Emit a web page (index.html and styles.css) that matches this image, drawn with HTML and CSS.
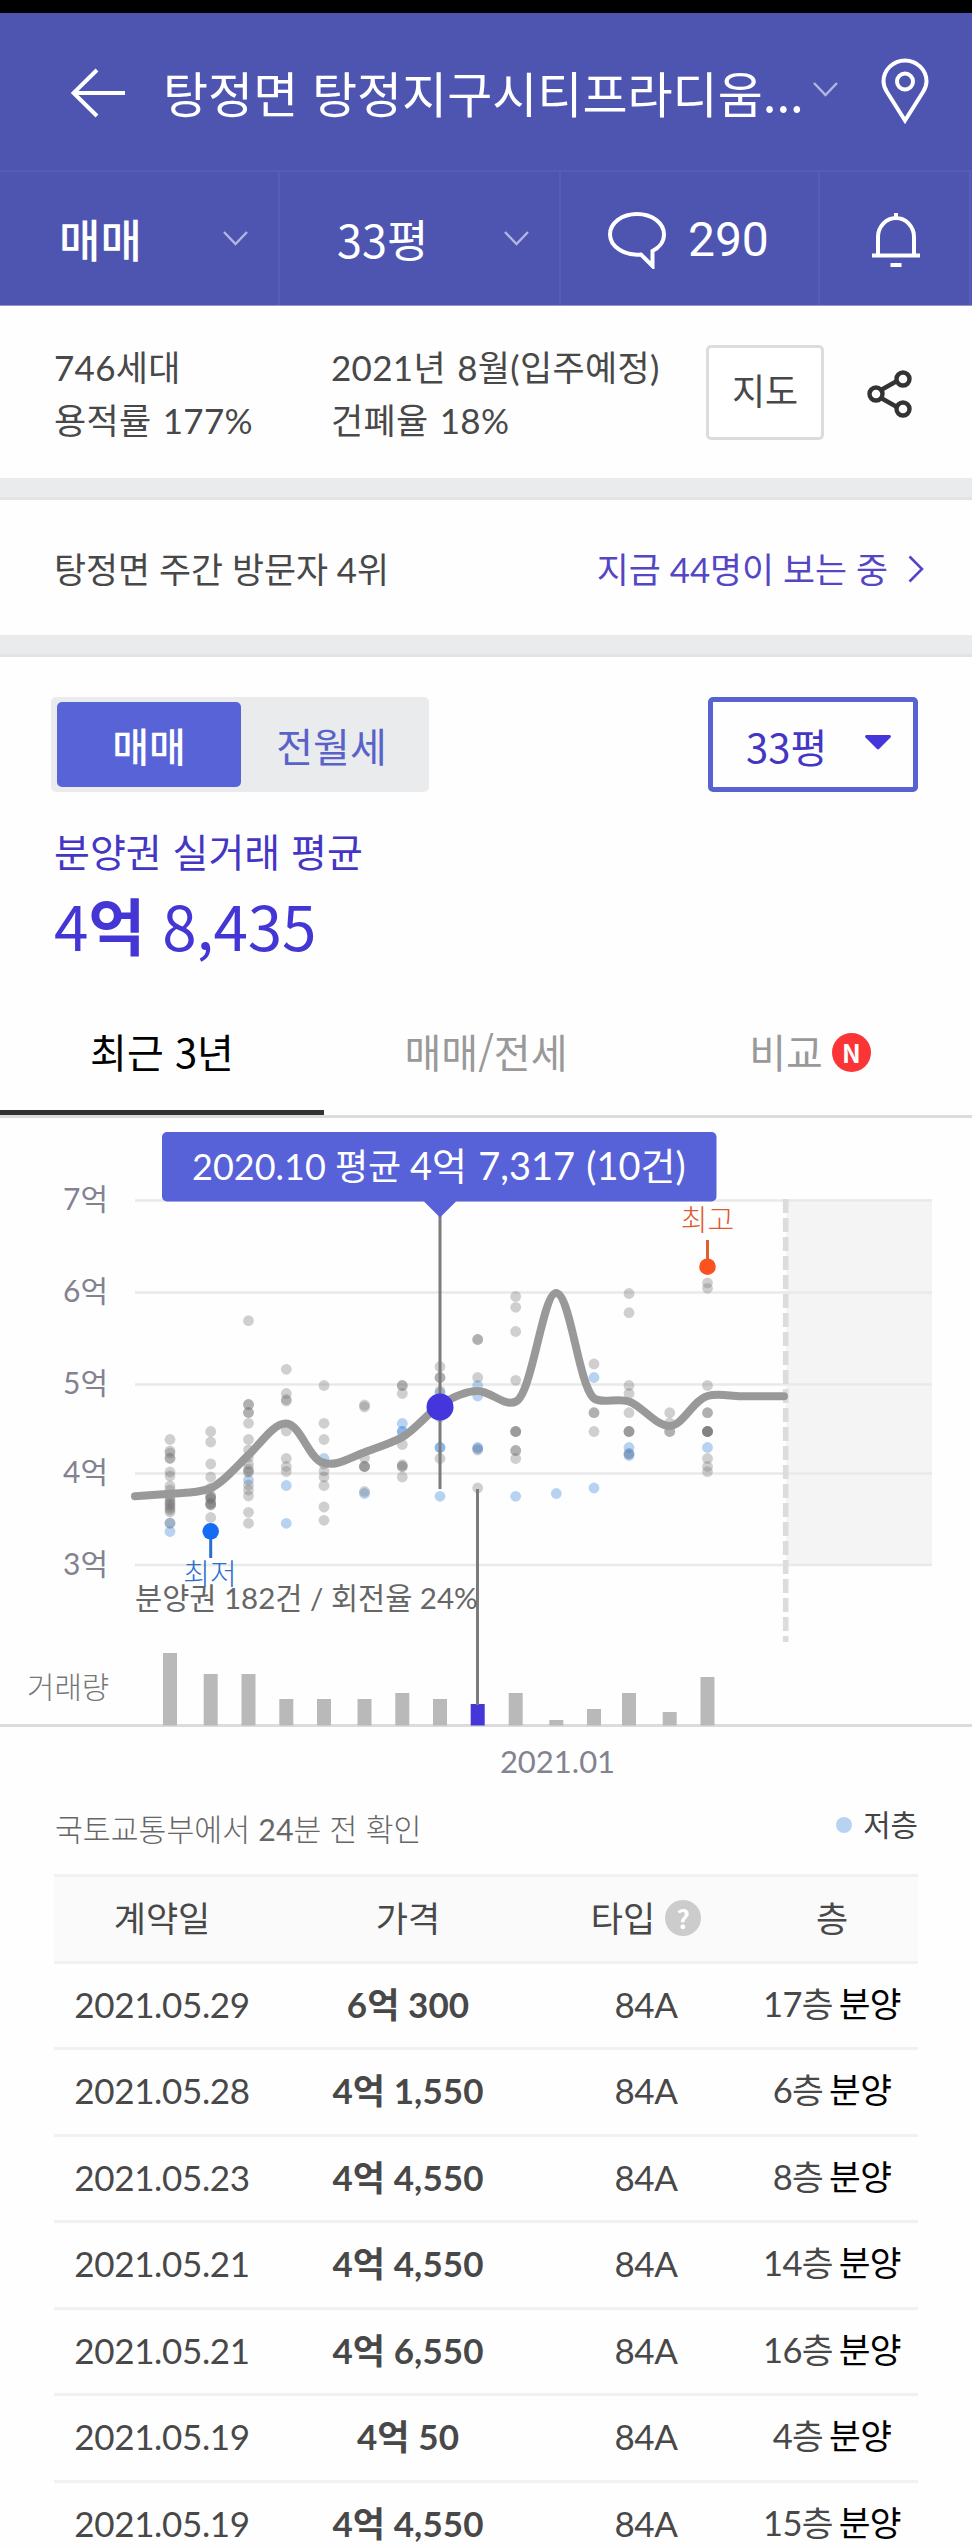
FILE: index.html
```html
<!DOCTYPE html>
<html lang="ko">
<head>
<meta charset="utf-8">
<title>탕정면 탕정지구시티프라디움</title>
<link rel="stylesheet" href="styles.css">
</head>
<body>
<div class="statusbar"></div>
<header class="header">
  <div class="titlebar">
    <svg class="back" width="54" height="50" viewBox="0 0 54 50"><path d="M26 2 2.500 25 26 48M2.500 25H54"/></svg>
    <h1 class="title">탕정면 탕정지구시티프라디움...</h1>
    <svg class="caret title-caret" width="25" height="15" viewBox="0 0 25 15"><path d="M1 1l11.500 12L24 1"/></svg>
    <svg class="pin" width="48" height="66" viewBox="0 0 48 66"><path d="M24 62.500 6 34C3.500 30 2.500 27 2.500 23.500a21.500 21 0 0 1 43 0C45.500 27 44.500 30 42 34z"/><circle cx="24" cy="23.500" r="8"/></svg>
  </div>
  <nav class="filters">
    <div class="filter trade"><span>매매</span><svg class="caret" width="25" height="15" viewBox="0 0 25 15"><path d="M1 1l11.500 12L24 1"/></svg></div>
    <div class="filter size"><span>33평</span><svg class="caret" width="25" height="15" viewBox="0 0 25 15"><path d="M1 1l11.500 12L24 1"/></svg></div>
    <div class="filter talk"><svg width="60" height="58" viewBox="0 0 60 58"><path d="M34 43.500C18 45 3 36 3 23.500 3 12 15 3 30 3S57 12 57 23.500C57 31 52 37 45.500 40V55z"/></svg><span>290</span></div>
    <div class="filter alarm"><svg width="50" height="56" viewBox="0 0 50 56"><path d="M25 1v6M7 43V25a18 19 0 0 1 36 0V43M1 43.500H49M19.500 53H30.500"/></svg></div>
  </nav>
</header>
<section class="info">
  <div class="facts facts-a"><div>746세대</div><div>용적률 177%</div></div>
  <div class="facts facts-b"><div>2021년 8월(입주예정)</div><div>건폐율 18%</div></div>
  <button class="map">지도</button>
  <svg class="share" width="46" height="48" viewBox="0 0 46 48"><path d="M14 20 30 11M14 28 30 37"/><circle cx="9" cy="24" r="6.500"/><circle cx="36" cy="9" r="6.500"/><circle cx="36" cy="39" r="6.500"/></svg>
</section>
<div class="band"></div>
<section class="visitors">
  <span>탕정면 주간 방문자 4위</span>
  <span class="now">지금 44명이 보는 중<svg width="16" height="28" viewBox="0 0 16 28"><path d="M1.500 1.500 14 14 1.500 26.500"/></svg></span>
</section>
<div class="band"></div>
<section class="summary">
  <div class="controls">
    <div class="toggle"><span class="on">매매</span><span class="off">전월세</span></div>
    <div class="select"><span>33평</span><svg width="26" height="15" viewBox="0 0 26 15"><path d="M1.500 0h23a1.500 1.500 0 0 1 1 2.500L14 14a1.500 1.500 0 0 1-2 0L.5 2.500A1.500 1.500 0 0 1 1.500 0z"/></svg></div>
  </div>
  <p class="avg-label">분양권 실거래 평균</p>
  <p class="avg">4<b>억</b> 8,435</p>
</section>
<nav class="tabs">
  <div class="tab current">최근 3년</div>
  <div class="tab">매매/전세</div>
  <div class="tab">비교<span class="new">N</span></div>
</nav>
<svg class="chart" width="972" height="672" viewBox="0 1118 972 672">
  <rect class="future" x="786" y="1199" width="146" height="367"/>
  <path class="grid" d="M135 1200.500H932M135 1292.500H932M135 1384.500H932M135 1473.500H932M135 1565H932"/>
  <path class="today" d="M785.700 1199V1642"/>
  <g class="axis">
    <text x="63" y="1210">7억</text><text x="63" y="1302">6억</text><text x="63" y="1394">5억</text><text x="63" y="1483">4억</text><text x="63" y="1575">3억</text>
  </g>
  <g id="dots"></g>
  <path class="base" d="M0 1725.500H972"/>
  <g id="bars"></g>
  <path class="trend" d="M135 1496.300 L170 1493.700 C188 1492.500 199 1493 211 1488 C223 1483 237 1466 248.500 1455 C262 1442 274 1423 286 1423.500 C300 1424 308 1456 321 1462 C335 1468 349 1458 364 1452.500 C378 1447 390 1444 402.500 1437 C415 1430 427 1414 440 1405 C453 1397 466 1391 477.500 1391 C491 1391 504 1407 516 1401.500 C532 1394 543 1293 556 1293 C570 1293 578 1381 593 1397.500 C601 1405 617 1397 629 1401.500 C642 1406 656 1426 669.500 1426 C683 1426 693 1400 707.500 1396 C718 1393 729 1396 741 1396.300 H784"/>
  <path class="cursor" d="M440 1210V1489M477.500 1489V1705"/>
  <circle class="picked" cx="440" cy="1407" r="13.500"/>
  <path class="low-line" d="M210.700 1535V1558"/><circle class="low-dot" cx="210.700" cy="1531.300" r="8.300"/>
  <text class="low" x="210" y="1584.500">최저</text>
  <path class="high-line" d="M707.500 1240V1262"/><circle class="high-dot" cx="707.500" cy="1266.700" r="8.300"/>
  <text class="high" x="707.500" y="1231">최고</text>
  <path class="tip" d="M167 1132H711.500a5 5 0 0 1 5 5V1196.500a5 5 0 0 1-5 5H456L440 1217.500 424 1201.500H167a5 5 0 0 1-5-5V1137a5 5 0 0 1 5-5z"/>
  <text class="tip-date" x="192" y="1180">2020.10 평균</text>
  <text class="tip-price" x="410" y="1180">4억 7,317 (10건)</text>
  <text class="turnover" x="135" y="1609">분양권 182건 / 회전율 24%</text>
  <text class="volume" x="27" y="1698">거래량</text>
  <text class="month" x="557.500" y="1773">2021.01</text>
</svg>
<section class="source"><span>국토교통부에서 <b>24</b>분 전 확인</span><span class="legend"><i></i>저층</span></section>
<table class="deals">
  <thead><tr><th class="c1">계약일</th><th class="c2">가격</th><th class="c3">타입<span class="help">?</span></th><th class="c4">층</th></tr></thead>
  <tbody>
    <tr><td>2021.05.29</td><td class="price">6억 300</td><td>84A</td><td class="floor">17층 <em>분양</em></td></tr>
    <tr><td>2021.05.28</td><td class="price">4억 1,550</td><td>84A</td><td class="floor">6층 <em>분양</em></td></tr>
    <tr><td>2021.05.23</td><td class="price">4억 4,550</td><td>84A</td><td class="floor">8층 <em>분양</em></td></tr>
    <tr><td>2021.05.21</td><td class="price">4억 4,550</td><td>84A</td><td class="floor">14층 <em>분양</em></td></tr>
    <tr><td>2021.05.21</td><td class="price">4억 6,550</td><td>84A</td><td class="floor">16층 <em>분양</em></td></tr>
    <tr><td>2021.05.19</td><td class="price">4억 50</td><td>84A</td><td class="floor">4층 <em>분양</em></td></tr>
    <tr><td>2021.05.19</td><td class="price">4억 4,550</td><td>84A</td><td class="floor">15층 <em>분양</em></td></tr>
  </tbody>
</table>
<script src="chart.js"></script>
</body>
</html>
```
FILE: styles.css
```css
* { box-sizing: border-box; margin: 0; padding: 0; }
html, body { width: 972px; height: 2548px; overflow: hidden; }
body { background: #fefefe; color: #484848; font-family: Lato, "Noto Sans CJK KR", sans-serif; font-size: 35px; font-weight: 400; }
svg { display: block; flex: none; fill: none; }
.statusbar { height: 13px; background: #000; }

.header { height: 293px; background: #4d55b1; color: #fff; font-family: "Noto Sans CJK KR", sans-serif; border-bottom: 1px solid #9296cc; }
.header svg { stroke: #fff; stroke-width: 4; }
.titlebar { height: 159px; display: flex; align-items: center; padding-left: 71px; border-bottom: 2px solid #555db8; }
.back { margin-top: 3px; }
.title { margin-left: 38px; width: 645px; font-size: 49px; font-weight: 400; white-space: nowrap; line-height: 60px; }
.header .caret { stroke: #b3b7e0; stroke-width: 2.400; }
.title-caret { margin-left: 5px; margin-top: -4px; }
.pin { margin-left: 43px; margin-top: -2px; }
.filters { display: flex; height: 133px; }
.filter { display: flex; align-items: center; border-right: 2px solid #555db8; font-size: 45px; line-height: 60px; }
.trade, .size { justify-content: space-between; }
.trade { width: 280px; padding: 0 30px 0 59px; font-weight: 500; }
.size { width: 281px; padding: 0 30px 0 57px; }
.talk { width: 259px; padding-left: 46px; gap: 21px; }
.talk span { font-family: Roboto, sans-serif; font-size: 48px; letter-spacing: -.1px; padding-top: 3px; }
.alarm { width: 151px; padding-left: 51px; }
.talk svg, .alarm svg { margin-top: 2px; }

.info { height: 172px; display: flex; align-items: center; padding: 0 0 0 54px; }
.facts { line-height: 53px; padding-top: 3px; white-space: nowrap; word-spacing: 2px; }
.facts-a { width: 277px; letter-spacing: .3px; }
.facts-b { width: 375px; letter-spacing: .3px; }
.map { width: 118px; height: 95px; border: 3px solid #dcdcdc; border-radius: 5px; background: #fff; color: #484848; font: 400 36px/1 "Noto Sans CJK KR", sans-serif; padding-bottom: 7px; }
.share { margin-left: 43px; margin-top: 3px; stroke: #333; stroke-width: 4.400; }
.band { height: 22px; background: #e9ebec; border-bottom: 3px solid #e2e3e4; }
.visitors { height: 135px; display: flex; align-items: center; justify-content: space-between; padding: 1px 48px 0 54px; font-size: 34.800px; }
.now { display: flex; align-items: center; gap: 20px; color: #5446c4; font-size: 34.800px; }
.now svg { stroke: #5446c4; stroke-width: 2.600; margin-top: 2px; }

.summary { height: 336px; padding: 40px 54px 0 51px; color: #4436c4; }
.controls { display: flex; justify-content: space-between; height: 95px; font-family: "Noto Sans CJK KR", sans-serif; font-size: 40px; }
.toggle { display: flex; width: 378px; background: #e9ebed; border-radius: 5px; padding: 5px 5px 5px 6px; color: #5862c9; }
.toggle span { display: flex; align-items: center; justify-content: center; }
.on { width: 184px; background: #5863d8; color: #fff; border-radius: 5px; font-weight: 500; }
.off { width: 183px; padding-right: 2px; }
.select { width: 210px; border: 5px solid #5862d0; border-radius: 5px; display: flex; align-items: center; justify-content: space-between; padding: 2px 22px 0 33px; }
.select svg { fill: #4436d8; margin-top: -6px; }
.avg-label { font: 400 39px/50px "Noto Sans CJK KR", sans-serif; padding-left: 3px; margin-top: 33px; }
.avg { font: 400 62px/80px "Noto Sans CJK KR", sans-serif; padding-left: 3px; margin-top: 9px; color: #4436d4; letter-spacing: -.2px; }
.avg b { font-weight: 700; }

.tabs { display: flex; height: 125px; border-bottom: 3px solid #dcdcdc; font: 400 40px/60px "Noto Sans CJK KR", sans-serif; color: #999; }
.tab { width: 324px; display: flex; align-items: center; justify-content: center; border-bottom: 5px solid transparent; padding-bottom: 2px; }
.current { color: #000; border-color: #333; }
.new { width: 39px; height: 39px; border-radius: 50%; background: #fb3535; color: #fff; font: 700 25px/38px "Noto Sans CJK KR", sans-serif; text-align: center; margin-left: 9px; margin-top: 3px; }

.future { fill: #f4f4f5; }
.grid { stroke: #e9e9e9; stroke-width: 2.600; }
.today { stroke: #dcdcdc; stroke-width: 5.600; stroke-dasharray: 14 5; }
.chart text { font-family: Lato, "Noto Sans CJK KR", sans-serif; font-weight: 300; }
.chart .axis text { fill: #828290; font-size: 30px; font-weight: 400; }
.high-price { fill: #6f6f6f; fill-opacity: .33; }
.low-price { fill: #468cdc; fill-opacity: .38; }
.base { stroke: #dcdcdc; stroke-width: 3; }
.bar { fill: #b9b9b9; }
.bar-on { fill: #4436d8; }
.trend { stroke: #999; stroke-width: 8; stroke-linecap: round; stroke-linejoin: round; }
.cursor { stroke: #7b7b7b; stroke-width: 3; }
.picked { fill: #4436dc; }
.low-line { stroke: #2a6ed0; stroke-width: 3; }
.low-dot { fill: #156bf3; }
.high-line { stroke: #e06035; stroke-width: 3; }
.high-dot { fill: #fb5220; }
.chart .low, .chart .high { font-size: 29px; text-anchor: middle; }
.low { fill: #2a6ed0; }
.high { fill: #dc5a30; }
.tip { fill: #5862d8; }
.tip-date, .tip-price { fill: #fff; }
.chart .tip-date { font-size: 36px; font-weight: 400; }
.chart .tip-price { font-size: 38px; font-weight: 400; word-spacing: 1.500px; }
.chart .turnover { fill: #666; font-size: 29.500px; font-weight: 400; }
.volume { fill: #777; font-size: 29.800px; }
.chart .month { fill: #828290; font-size: 31px; text-anchor: middle; font-weight: 400; }

.source { display: flex; justify-content: space-between; height: 84px; padding: 16px 54px 0 55px; font-size: 30.300px; font-weight: 300; line-height: 46px; color: #666; }
.source b { font-weight: 400; }
.legend { display: flex; align-items: center; height: 38px; color: #444; font-weight: 400; font-size: 29.800px; }
.legend i { width: 16px; height: 16px; border-radius: 50%; background: #b8d2f1; margin-right: 11px; }

.deals { width: 864px; margin-left: 54px; border-collapse: collapse; table-layout: fixed; text-align: center; white-space: nowrap; }
.deals th, .deals td { height: 86.500px; border-bottom: 3px solid #f1f1f1; font-weight: 400; vertical-align: middle; line-height: 50px; padding-bottom: 3px; }
.deals td { letter-spacing: -.35px; }
.deals th { background: #fafafa; border-top: 3px solid #f1f1f1; font-family: "Noto Sans CJK KR", sans-serif; }
.c1 { width: 216px; }
.c2 { width: 276px; }
.c3 { width: 200px; }
.c4 { width: 172px; }
.deals .price { font-weight: 700; letter-spacing: .1px; }
.deals .floor { font-size: 34.500px; word-spacing: -2.500px; letter-spacing: -.6px; }
.deals em { font-style: normal; color: #000; }
.help { display: inline-block; width: 36px; height: 36px; border-radius: 50%; background: #ccc; color: #fff; font: 700 26px/35px "Noto Sans CJK KR", sans-serif; margin-left: 10px; vertical-align: 3px; }
```
FILE: chart.js
```js
const NS = 'http://www.w3.org/2000/svg';

function add(parent, tag, attrs) {
  const el = document.createElementNS(NS, tag);
  for (const k in attrs) el.setAttribute(k, attrs[k]);
  parent.appendChild(el);
}

// One entry per month: x, deals, low-floor deals (y positions), top of the volume bar.
const months = [
  { x: 170, deals: [1439.5, 1451, 1453, 1458, 1458.5, 1472, 1476, 1486, 1490, 1497, 1500, 1502, 1504, 1506, 1508, 1510, 1512, 1523], low: [1523.3, 1531.5], bar: 1653 },
  { x: 210.7, deals: [1431.5, 1442, 1464, 1477, 1488, 1496, 1497, 1498, 1499, 1503, 1504, 1504.5, 1505, 1517.5], low: [], bar: 1674 },
  { x: 248.5, deals: [1320.7, 1404.5, 1404.5, 1412.5, 1412.5, 1423.3, 1439.5, 1450, 1457, 1464, 1469, 1471.5, 1472, 1485, 1490, 1496, 1512.3, 1523.3], low: [1480], bar: 1674 },
  { x: 286.3, deals: [1369.3, 1393.5, 1399.5, 1401, 1431, 1458.5, 1466.5, 1471.5], low: [1485.5, 1523.3], bar: 1699 },
  { x: 324, deals: [1385.5, 1423.3, 1439.5, 1464, 1471, 1477, 1485.5, 1507, 1520.3], low: [1458.5], bar: 1699 },
  { x: 364.5, deals: [1405, 1407, 1458, 1466.5, 1466.5, 1466.5, 1491.5], low: [1493.5], bar: 1699 },
  { x: 402.3, deals: [1385.5, 1385.5, 1393.5, 1444.5, 1464.7, 1466.5, 1466.5, 1477], low: [1423.5, 1431.5, 1431.5], bar: 1693 },
  { x: 440, deals: [1366.7, 1377.5, 1377.5, 1391, 1458.5], low: [1393, 1417, 1447.5, 1447.5, 1496.3], bar: 1699 },
  { x: 477.7, deals: [1339.5, 1339.5, 1377.5, 1450, 1488], low: [1385.5, 1396, 1447.5, 1448.5], bar: 1704, on: true },
  { x: 515.7, deals: [1296.5, 1307.3, 1331.5, 1380.3, 1431.5, 1431.5, 1431.5, 1450.5, 1450.5, 1458.5], low: [1496.3], bar: 1693 },
  { x: 556.3, deals: [], low: [1493.5], bar: 1720 },
  { x: 594, deals: [1364, 1412.7, 1412.7, 1431.5], low: [1377.5, 1488], bar: 1709 },
  { x: 629, deals: [1293.5, 1312.7, 1385.5, 1393.5, 1412.7, 1431.5, 1431.5, 1431.5, 1454], low: [1447.5, 1453.5, 1455.5], bar: 1693 },
  { x: 669.7, deals: [1412.7, 1423, 1431.5, 1431.5], low: [], bar: 1712 },
  { x: 707.5, deals: [1283, 1288.3, 1385.5, 1412.7, 1412.7, 1431.5, 1431.5, 1431.5, 1431.5, 1431.5, 1458.5, 1466.5, 1471.7], low: [1447.5], bar: 1677 }
];

const dots = document.getElementById('dots');
const bars = document.getElementById('bars');
for (const m of months) {
  for (const y of m.low) add(dots, 'circle', { cx: m.x, cy: y, r: 5.4, class: 'low-price' });
  for (const y of m.deals) add(dots, 'circle', { cx: m.x, cy: y, r: 5.4, class: 'high-price' });
  add(bars, 'rect', { x: m.x - 7, y: m.bar, width: 14, height: 1725.5 - m.bar, class: m.on ? 'bar-on' : 'bar' });
}
```
